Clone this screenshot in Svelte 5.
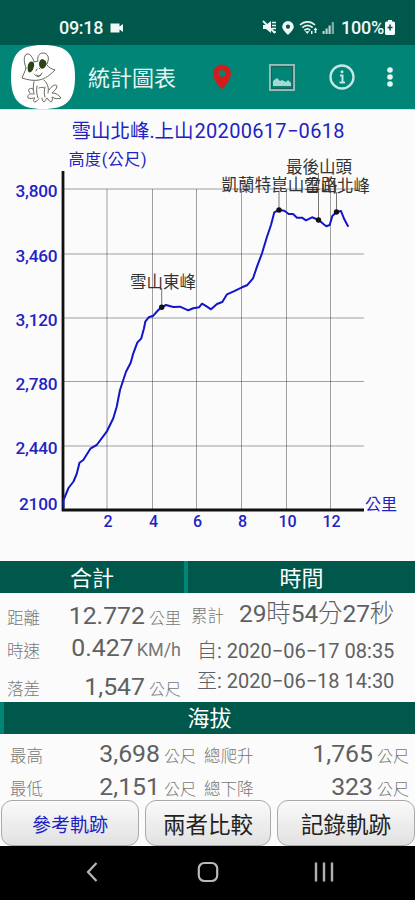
<script>
    let selected = 0;

    const tabs = ['參考軌跡', '兩者比較', '記錄軌跡'];

    const yTicks = [
        { y: 189, label: '3,800', len: 42 },
        { y: 254, label: '3,460', len: 42 },
        { y: 318, label: '3,120', len: 42 },
        { y: 381.5, label: '2,780', len: 42 },
        { y: 446, label: '2,440', len: 42 }
    ];

    const xTicks = [
        { x: 107, label: '2' },
        { x: 152.5, label: '4' },
        { x: 196.5, label: '6' },
        { x: 241.5, label: '8' },
        { x: 286.5, label: '10' },
        { x: 330.5, label: '12' }
    ];

    const track = [
        [63.5, 508], [63.5, 500], [68.5, 488], [73.5, 481.5], [76.7, 474], [79.5, 462.7], [83.3, 460],
        [90.7, 448.3], [96.7, 445], [106.7, 431.7], [113.3, 418.3], [116.7, 406.7], [120, 390],
        [123.3, 380], [126, 371.7], [130.7, 362.7], [133.3, 353.3], [137.3, 342.7], [141.3, 338.3],
        [144, 328.3], [145.3, 321.7], [148.7, 317.3], [153.3, 315.7], [158.3, 310], [161.7, 307.3],
        [166, 305], [173.3, 307], [180, 306.7], [188.3, 310.3], [193.3, 308.3], [199, 307.3],
        [202, 303.7], [207, 306.7], [211, 309.3], [217, 304], [222.3, 302], [227, 294.3],
        [233.7, 291.3], [242, 287.3], [247, 285.3], [253, 278.3], [257, 266.7], [262, 253.3],
        [267, 236.7], [271, 225], [274.3, 212.3], [278.7, 210], [284.3, 210.7], [288.7, 214],
        [293, 214], [297, 217.7], [302, 217.7], [306, 220.3], [312, 217.3], [318.7, 220],
        [323.7, 224.3], [326.3, 226.3], [329.7, 225], [332.3, 216], [336.3, 212.3], [341, 211],
        [344.3, 219.3], [348.3, 226.7]
    ];

    const peaks = [
        { x: 161.7, y: 307.3, top: 288, tx: 130, ty: 287.5, len: 66, name: '雪山東峰' },
        { x: 279, y: 210, top: 192, tx: 221.5, ty: 191, len: 116, name: '凱蘭特崑山岔路' },
        { x: 318.5, y: 220, top: 173, tx: 286, ty: 172.5, len: 66, name: '最後山頭' },
        { x: 336.5, y: 212, top: 192, tx: 304, ty: 192, len: 66, name: '雪山北峰' }
    ];

    $: points = track.map((p) => p.join(',')).join(' ');
</script>

<div class="screen">
    <div class="status">
        <span class="clock">09:18</span>
        <svg class="cam" width="14" height="10" viewBox="0 0 14 10">
            <path d="M.5.500h9v3L13 1v8L9.500 6.500v3h-9z" fill="#f0f8f7"/>
        </svg>
        <svg class="signals" width="74" height="18" viewBox="0 0 74 18">
            <g fill="#f0f8f7">
                <path d="M1 6h3l5-4v12l-5-4H1z"/>
                <path d="M1 2l12 12" stroke="#f0f8f7" stroke-width="1.800"/>
                <path d="M10 3.500h4M10 6.500h4M10 9.500h4M11 13h3" stroke="#f0f8f7" stroke-width="1.500"/>
                <path fill-rule="evenodd" d="M26 2a5.800 5.800 0 0 0-5.800 5.800C20.200 11 26 16 26 16s5.800-5 5.800-8.200A5.800 5.800 0 0 0 26 2zm0 3.600a2.100 2.100 0 1 1 0 4.200 2.100 2.100 0 0 1 0-4.200z"/>
                <path d="M43 12.200h4.600L45.300 15z"/>
                <path d="M53.500 8.500l2 2.500h-1.200v3h-1.600v-3h-1.200zM49 12h1.500v3H49z"/>
            </g>
            <path d="M38 6c4.300-4.300 10.700-4.300 15 0M40.300 8.700c3-3 7.400-3 10.400 0M42.300 11.300c2-1.800 4-1.800 6 0" fill="none" stroke="#e6f3f1" stroke-width="1.700"/>
            <path d="M60.500 15v-3h2.200v3zM63.500 15V9.500h2.200V15zM66.500 15V6.500h2.200V15z" fill="#b6d3cf"/>
            <path d="M69.700 15V3H72v12z" fill="#7fa9a4"/>
        </svg>
        <span class="percent">100%</span>
        <svg class="battery" width="10" height="15" viewBox="0 0 10 15">
            <path d="M3 0h4v1.500h1.500A1.500 1.500 0 0 1 10 3v10.500A1.500 1.500 0 0 1 8.500 15h-7A1.500 1.500 0 0 1 0 13.500V3a1.500 1.500 0 0 1 1.500-1.500H3z" fill="#f4fbfa"/>
            <path d="M5 4.500v6M2.500 7.500h5" stroke="#00574b" stroke-width="1.600"/>
        </svg>
    </div>

    <header>
        <svg class="avatar" width="64" height="64" viewBox="0 0 64 64">
            <path d="M32 0C55 0 64 8 64 32S55 64 32 64 0 56 0 32 9 0 32 0z" fill="#fff"/>
            <g fill="none" stroke="#66665c" stroke-width="1" stroke-linecap="round" stroke-linejoin="round">
                <path d="M15 23c-2-5-3-13 1-14 3-1 6 4 7 8l4-1c-1-4 1-8 5-8 5 0 7 5 4 11"/>
                <path d="M15 23c-1 4-3 7-4 10 6 2 12 3 17 2 6-1 11-5 16-10-3-1-6-2-8-5"/>
                <path d="M26 24l-1 2M28 23l1 1M23 29c2 3 6 3 8-1M26 30l1 2 3-2"/>
                <path d="M23 37c-1 4-1 8 0 12M33 35c4 4 5 8 4 13M26 41c-1 5 0 9 1 12M34 42c-1 4-1 7 0 10M28 43c2-1 4-1 5 0"/>
                <path d="M22 44c-4-2-6 1-3 4M22 49c-4-1-6 2-5 4 2 1 5 0 7 0-2 2-2 4 0 4 2-1 3-2 4-3"/>
                <path d="M38 45c3-5 7-6 8-4 0 3-3 5-5 7 4 0 7 2 9 5-3 1-6 1-9-1 1 2 0 5-1 5-2-1-3-3-4-4-2 2-2 4-3 4-2-1-2-3-2-4"/>
            </g>
            <path d="M20 16.500c3-.5 4 3 2.500 6.500-1 4-4.500 6-5.500 3-1-4 0-9 3-9.500zM30 14.500c3-1 6 2 5.500 5-1 3-4 5.500-6 3.500-2-2-2-7 .5-8.500z" fill="#2b4415"/>
        </svg>
        <h1>統計圖表</h1>
        <svg class="pin" width="20" height="26" viewBox="0 0 20 26">
            <path fill-rule="evenodd" d="M10 .500A9 9 0 0 0 1 9.500C1 16.500 10 25.500 10 25.500S19 16.500 19 9.500A9 9 0 0 0 10 .500zm0 5.700a3.300 3.300 0 1 1 0 6.600 3.300 3.300 0 0 1 0-6.600z" fill="#d51c1c"/>
        </svg>
        <svg class="image" width="26" height="27" viewBox="0 0 26 27">
            <rect x="1" y="1" width="24" height="25" fill="none" stroke="#93c0bd" stroke-width="2"/>
            <rect x="2.500" y="2.500" width="21" height="22" fill="none" stroke="#1d5f5b" stroke-width="1.200"/>
            <path d="M4 22v-5l4-3 3 3 2-1 4 2 2-2 3 3v3z" fill="#a9d8d4"/>
        </svg>
        <svg class="info" width="26" height="26" viewBox="0 0 26 26">
            <circle cx="13" cy="13" r="11.500" fill="none" stroke="#c5e8e4" stroke-width="2.300"/>
            <path d="M11 11.500h2.500V18M10.500 18.500h5.500" fill="none" stroke="#c5e8e4" stroke-width="2"/>
            <circle cx="13" cy="7.700" r="1.500" fill="#c5e8e4"/>
        </svg>
        <svg class="more" width="6" height="20" viewBox="0 0 6 20">
            <circle cx="3" cy="3" r="2.800" fill="#e6f6f4"/>
            <circle cx="3" cy="10" r="2.800" fill="#e6f6f4"/>
            <circle cx="3" cy="17" r="2.800" fill="#e6f6f4"/>
        </svg>
    </header>

    <svg class="chart" width="415" height="451" viewBox="0 110 415 451">
        <text class="blue" x="71.500" y="138" font-size="19.500" textLength="122">雪山北峰.上山</text>
        <text class="blue" x="194.500" y="138" font-size="20" textLength="150">20200617−0618</text>
        <text class="blue" x="68.500" y="165" font-size="16" textLength="78">高度(公尺)</text>

        {#each yTicks as tick}
            <line class="grid" x1="63" x2="364" y1={tick.y} y2={tick.y}/>
            <text class="num" x="15.500" y={tick.y + 8} textLength={tick.len}>{tick.label}</text>
        {/each}
        <text class="num" x="19" y="510" textLength="38.500">2100</text>

        {#each xTicks as tick}
            <line class="grid" x1={tick.x} x2={tick.x} y1="189" y2="509"/>
            <text class="num km" x={tick.x + 1} y="527" text-anchor="middle">{tick.label}</text>
        {/each}
        <text class="blue" x="365" y="509.500" font-size="16" textLength="32">公里</text>

        <path d="M63 171v339h301" fill="none" stroke="#111" stroke-width="2.800"/>
        <polyline {points} fill="none" stroke="#1414c8" stroke-width="2" stroke-linejoin="round"/>

        {#each peaks as peak}
            <line x1={peak.x} x2={peak.x} y1={peak.top} y2={peak.y} stroke="#777" stroke-width="1"/>
            <circle cx={peak.x} cy={peak.y} r="2.700" fill="#111"/>
            <text class="peak" x={peak.tx} y={peak.ty} textLength={peak.len}>{peak.name}</text>
        {/each}
    </svg>

    <div class="bar split">
        <div class="left">合計</div>
        <div class="right">時間</div>
    </div>
    <div class="totals">
        <div class="sum">
            <div class="row r1"><span class="label">距離</span><span class="value">12.772</span><span class="unit">公里</span></div>
            <div class="row r2"><span class="label">時速</span><span class="value">0.427</span><span class="unit kmh">KM/h</span></div>
            <div class="row r3"><span class="label">落差</span><span class="value">1,547</span><span class="unit">公尺</span></div>
        </div>
        <div class="time">
            <div class="row t1">
                <span class="label">累計</span>
                <span class="elapsed">29<i>時</i>54<i>分</i>27<i>秒</i></span>
            </div>
            <div class="date"><i>自</i>: 2020−06−17 08:35</div>
            <div class="date"><i>至</i>: 2020−06−18 14:30</div>
        </div>
    </div>

    <div class="bar altitude">海拔</div>
    <div class="heights">
        <div class="row"><span class="label">最高</span><span class="value">3,698</span><span class="unit">公尺</span></div>
        <div class="row"><span class="label">總爬升</span><span class="value">1,765</span><span class="unit">公尺</span></div>
        <div class="row"><span class="label">最低</span><span class="value">2,151</span><span class="unit">公尺</span></div>
        <div class="row"><span class="label">總下降</span><span class="value">323</span><span class="unit">公尺</span></div>
    </div>

    <div class="tabs">
        {#each tabs as tab, i}
            <button class:active={selected === i} on:click={() => (selected = i)}>{tab}</button>
        {/each}
    </div>

    <nav>
        <svg width="12" height="22" viewBox="0 0 12 22">
            <path d="M10.500 2L2 11l8.500 9" fill="none" stroke="#b8b8b8" stroke-width="2.200"/>
        </svg>
        <svg class="home" width="22" height="22" viewBox="0 0 22 22">
            <rect x="1.800" y="2" width="18.400" height="18" rx="5.500" fill="none" stroke="#b8b8b8" stroke-width="2.200"/>
        </svg>
        <svg width="20" height="22" viewBox="0 0 20 22">
            <path d="M2 1.500v19M10 1.500v19M18 1.500v19" stroke="#b0b0b0" stroke-width="2.400"/>
        </svg>
    </nav>
</div>

<style>
    :global(body) {
        margin: 0;
        background: #fbfbfb;
    }

    .screen {
        width: 415px;
        height: 900px;
        overflow: hidden;
        display: flex;
        flex-direction: column;
        background: #fbfbfb;
        font-family: Roboto, 'Noto Sans CJK TC', sans-serif;
        color: #606060;
    }

    svg {
        display: block;
        flex: none;
    }

    i {
        font-style: normal;
        font-weight: 300;
    }

    .status {
        height: 45px;
        flex: none;
        box-sizing: border-box;
        padding: 10px 20px 0 59px;
        display: flex;
        align-items: center;
        background: #00574b;
        color: #f0f8f7;
        font-size: 18px;
        font-weight: 500;
    }

    .clock {
        width: 44px;
        letter-spacing: -0.3px;
    }

    .cam {
        margin-left: 7px;
    }

    .signals {
        margin-left: auto;
    }

    .percent {
        width: 43px;
        margin-left: 5px;
        letter-spacing: -0.2px;
    }

    .battery {
        margin-left: 1px;
    }

    header {
        height: 64px;
        flex: none;
        padding: 0 22px 0 11px;
        display: flex;
        align-items: center;
        background: #008577;
        border-bottom: 1px solid #b9efe8;
    }

    h1 {
        width: 88px;
        margin: 0 0 0 13px;
        padding-top: 3px;
        color: #e4f4f2;
        font-size: 22px;
        font-weight: 400;
        line-height: 30px;
        white-space: nowrap;
    }

    .pin {
        margin-left: 36px;
    }

    .image {
        margin-left: 37px;
    }

    .info {
        margin-left: 34px;
    }

    .more {
        margin-left: auto;
    }

    .blue, .num {
        fill: #2222c4;
    }

    .num {
        font-size: 17.2px;
        font-weight: 500;
    }

    .km {
        font-size: 16px;
    }

    .grid {
        stroke: #000;
        stroke-opacity: 0.36;
        stroke-width: 1;
    }

    .peak {
        font-size: 16.5px;
        fill: #333;
    }

    .bar {
        height: 32px;
        flex: none;
        background: #00574b;
        color: #fff;
        font-size: 22px;
        line-height: 35px;
        text-align: center;
    }

    .split {
        display: flex;
    }

    .left {
        width: 184px;
        border-right: 4px solid #008577;
    }

    .right {
        flex: 1;
    }

    .totals {
        display: flex;
        height: 109px;
        flex: none;
    }

    .sum {
        width: 174px;
        padding-left: 7px;
    }

    .time {
        padding-left: 10px;
        flex: 1;
    }

    .row {
        display: flex;
        align-items: baseline;
        height: 36px;
        line-height: 36px;
        white-space: nowrap;
    }

    .label {
        font-size: 16.5px;
        font-weight: 300;
        color: #777;
    }

    .value {
        margin-left: auto;
        font-size: 24.8px;
    }

    .unit {
        margin-left: 4px;
        font-size: 16px;
        font-weight: 300;
        color: #777;
    }

    .kmh {
        font-size: 18px;
        font-weight: 400;
        margin-left: 3px;
    }

    .r1 {
        padding-top: 5px;
        height: 32px;
    }

    .r2 {
        height: 39px;
    }

    .r2 .label {
        line-height: 44px;
        align-self: flex-start;
    }

    .t1 {
        height: 43px;
        align-items: flex-start;
    }

    .t1 .label {
        line-height: 48px;
    }

    .elapsed {
        margin-left: 15px;
        font-size: 24.5px;
        line-height: 41px;
        letter-spacing: -0.1px;
    }

    .date {
        height: 30px;
        line-height: 30px;
        padding-left: 6px;
        font-size: 20px;
        white-space: nowrap;
    }

    .altitude {
        box-sizing: border-box;
        border-left: 4px solid #008577;
        line-height: 34px;
    }

    .heights {
        height: 64px;
        flex: none;
        display: grid;
        grid-template-columns: 186px 205px;
        grid-template-rows: 33px 33px;
        column-gap: 8px;
        padding-top: 2px;
        padding-left: 10px;
    }

    .tabs {
        height: 46px;
        flex: none;
        display: grid;
        grid-template-columns: 138px 126px 138px;
        column-gap: 6px;
        padding-left: 1px;
    }

    button {
        height: 46px;
        padding: 0;
        border: 1px solid #aaa;
        border-radius: 11px;
        background: linear-gradient(#fafafa, #e2e1e2);
        color: #222;
        font-family: inherit;
        font-size: 22.5px;
    }

    .active {
        color: #2222c4;
        font-size: 19px;
    }

    nav {
        flex: 1;
        display: flex;
        justify-content: space-between;
        align-items: center;
        padding: 0 81px 2px 86px;
        background: #000;
    }

    .home {
        margin-left: 3px;
    }
</style>
